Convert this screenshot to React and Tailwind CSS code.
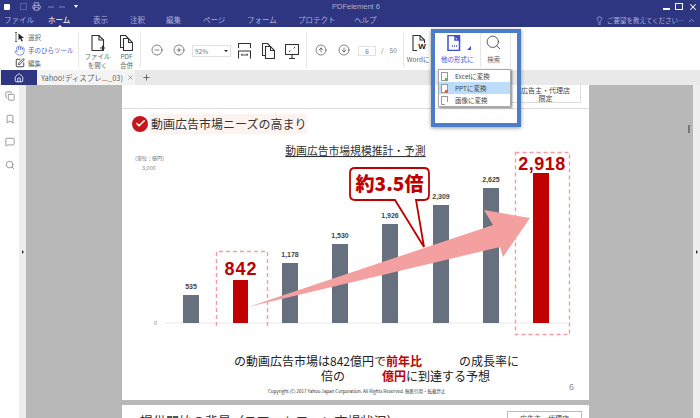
import {
    Bookmark, ChevronUp, CircleArrowDown, CircleArrowUp, CircleMinus, CirclePlus, Copy,
    Hand, House, Lightbulb, MessageSquare, Plus, Printer, Search, SquarePen, X, Check,
} from 'lucide-react';

const jp = "font-['Noto_Sans_CJK_JP','Noto_Sans',sans-serif]";
const latin = "font-['Liberation_Sans',sans-serif]";

const menus = [
    ['ファイル', 'w-[43px] pl-[4px]'],
    ['ホーム', 'w-[45px] pl-[5px] text-white'],
    ['表示', 'w-[37px] pl-[5px]'],
    ['注釈', 'w-[36px] pl-[5px]'],
    ['編集', 'w-[37px] pl-[5px]'],
    ['ページ', 'w-[44px] pl-[5px]'],
    ['フォーム', 'w-[51px] pl-[5px]'],
    ['プロテクト', 'w-[57px] pl-[5px]'],
    ['ヘルプ', 'w-[40px] pl-[4px]'],
];

const bars = [
    { x: 183, top: 295, label: '535' },
    { x: 282, top: 263, label: '1,178' },
    { x: 332, top: 244, label: '1,530' },
    { x: 382, top: 224, label: '1,926' },
    { x: 433, top: 205, label: '2,309' },
    { x: 483, top: 188, label: '2,625' },
];

function Sep({ className = '' }) {
    return <div className={`w-px h-[34px] mt-[6px] shrink-0 bg-[#e6e6e6] ${className}`} />;
}

// page with a folded corner, used by most of the ribbon buttons
function PageIcon({ className = '', weight = 1.1, children }) {
    return (
        <svg width="14" height="16" viewBox="0 0 14 16" fill="none" stroke="currentColor" strokeWidth={weight} className={className}>
            <path d="M1 .5H8L12.5 5V15.5H1Z" />
            <path d="M8 .5V5H12.5" />
            {children}
        </svg>
    );
}

function PagesIcon({ className = '' }) {
    return (
        <svg width="13" height="16" viewBox="0 0 13 16" fill="none" stroke="currentColor" strokeWidth="1.1" className={className}>
            <path d="M3.5 12.5H.5V.5H5.5L8 3" />
            <path d="M3.5 3.5H8.5L12.5 7.5V15.5H3.5Z" />
            <path d="M8.5 3.5V7.5H12.5" />
        </svg>
    );
}

function SelectIcon() {
    return (
        <svg width="10" height="10" viewBox="0 0 10 10" className="shrink-0 text-[#222]">
            <path d="M1 0V10M0 .5H2M0 9.5H2" stroke="#555" strokeWidth=".8" fill="none" />
            <path d="M3.5 1.5L9 6H6.5L7.8 9L6.5 9.5L5.2 6.6L3.5 8Z" fill="currentColor" />
        </svg>
    );
}

function FitWidthIcon() {
    return (
        <svg width="13" height="16" viewBox="0 0 13 16" fill="none" stroke="#333" strokeWidth="1.1" className="ml-[7px] mt-[16px] shrink-0">
            <path d="M.5 5V.5H12.5V5" />
            <path d="M.5 15.5V8H12.5V15.5" />
            <path d="M3 12H10M3 12L4.5 10.8M10 12L8.5 10.8" strokeWidth=".9" />
        </svg>
    );
}

function MonitorIcon() {
    return (
        <svg width="14" height="15" viewBox="0 0 14 15" fill="none" stroke="#333" strokeWidth="1.1" className="ml-[10px] mt-[17px] shrink-0">
            <rect x=".5" y=".5" width="13" height="10" />
            <path d="M7 10.5V14M4 14.5H10" />
            <path d="M4 8L5.5 6.5M8.5 4.5L10 3" strokeWidth=".9" />
        </svg>
    );
}

function ConvertItem({ label, dot, active }) {
    return (
        <div className={`flex items-center h-[12px] pl-[2px] ${active ? 'bg-[#bcdcf7]' : ''}`}>
            <div className="relative w-[7px] h-[9px] border border-[#999] bg-white">
                <div className={`absolute -right-px -bottom-px w-[3px] h-[3px] ${dot}`} />
            </div>
            <span className="ml-[7px] text-[6.5px] leading-none text-[#444]">{label}</span>
        </div>
    );
}

function TitleBar() {
    return (
        <div className="relative flex items-center h-[13px] text-[#c3c7e2]">
            <div className="flex items-center pl-[4px]">
                <div className="w-[6px] h-[6px] bg-white rounded-[1px]" />
                <div className="w-[7px] h-[7px] ml-[10px] border border-[#565ca0]" />
                <Printer size={9} className="ml-[5px]" />
                <div className="w-[6px] h-[2px] ml-[7px] bg-[#565ca0]" />
                <div className="w-[6px] h-[2px] ml-[5px] bg-[#565ca0]" />
                <div className="w-0 h-0 ml-[9px] border-x-[2px] border-t-[3px] border-x-transparent border-t-white" />
            </div>
            <span className={`absolute left-[332px] text-[7.5px] leading-none text-[#a9aed6] ${latin}`}>PDFelement 6</span>
            <div className="ml-auto flex items-center gap-[5px] pr-[2px] text-white">
                <div className="w-[7px] h-[2px] mt-[5px] bg-white" />
                <div className="w-[8px] h-[7px] border border-white" />
                <X size={10} strokeWidth={2.5} />
            </div>
        </div>
    );
}

function MenuBar() {
    return (
        <div className="relative flex items-center h-[14px] text-[7.5px] leading-none text-[#a9aed6] whitespace-nowrap">
            {menus.map(([label, cls]) => (
                <span key={label} className={cls}>{label}</span>
            ))}
            <div className="ml-auto flex items-center pr-[4px]">
                <Lightbulb size={9} />
                <span className="ml-[3px] w-[79px] text-[6.5px]">ご要望を教えてください…</span>
                <ChevronUp size={9} className="ml-[1px]" />
            </div>
            <div className="absolute left-[58px] bottom-0 w-0 h-0 border-x-[2px] border-b-[2px] border-x-transparent border-b-white" />
        </div>
    );
}

function Ribbon() {
    return (
        <div className="flex items-start h-[43px] bg-white text-[#666] text-[6.5px] leading-[9px] whitespace-nowrap">
            <div className="flex flex-col w-[78px] pt-[5px] pl-[15px] gap-[3px] shrink-0">
                <div className="flex items-center h-[10px] gap-[3px]"><SelectIcon />選択</div>
                <div className="flex items-center h-[10px] -ml-[1px] gap-[3px] text-[#3d5bd6]"><Hand size={11} strokeWidth={1.4} />手のひらツール</div>
                <div className="flex items-center h-[10px] gap-[3px]"><SquarePen size={10} className="text-[#222]" />編集</div>
            </div>
            <Sep />
            <div className="flex flex-col items-center w-[25px] ml-[6px] mt-[8px] shrink-0">
                <PageIcon className="text-[#333]">
                    <path d="M9 13H14M11.5 10.5V15.5" stroke="#333" fill="none" />
                </PageIcon>
                <span className="text-center mt-px">ファイル<br />を開く</span>
            </div>
            <div className="flex flex-col items-center w-[13px] ml-[10px] mt-[8px] shrink-0">
                <PagesIcon className="text-[#333]" />
                <span className="text-center mt-px">PDF<br />合併</span>
            </div>
            <Sep className="ml-[7px]" />
            <CircleMinus size={12} strokeWidth={1.2} className="ml-[10px] mt-[17px] shrink-0 text-[#333]" />
            <CirclePlus size={12} strokeWidth={1.2} className="ml-[10px] mt-[17px] shrink-0 text-[#333]" />
            <div className="flex items-center justify-between w-[39px] h-[12px] ml-[7px] mt-[18px] px-[2px] shrink-0 border border-[#e2e2e2] text-[6.5px] text-[#777]">
                92%
                <div className="w-0 h-0 border-x-[2px] border-t-[2px] border-x-transparent border-t-[#222]" />
            </div>
            <FitWidthIcon />
            <PagesIcon className="ml-[11px] mt-[16px] shrink-0 text-[#333]" />
            <MonitorIcon />
            <Sep className="ml-[7px]" />
            <CircleArrowUp size={12} strokeWidth={1.2} className="ml-[8px] mt-[17px] shrink-0 text-[#333]" />
            <CircleArrowDown size={12} strokeWidth={1.2} className="ml-[11px] mt-[17px] shrink-0 text-[#333]" />
            <div className="flex items-center justify-center w-[18px] h-[10px] ml-[8px] mt-[19px] shrink-0 border border-[#e2e2e2] text-[#777]">6</div>
            <span className="ml-[5px] mt-[19px] text-[#777]">/</span>
            <span className="ml-[6px] mt-[19px] text-[#777]">50</span>
            <Sep className="ml-[6px]" />
            <div className="flex flex-col items-center w-[28px] ml-[1px] mt-[8px] shrink-0 overflow-hidden">
                <div className="relative">
                    <PageIcon className="text-[#333]" />
                    <span className={`absolute -right-[1px] bottom-0 px-px text-[8px] leading-none font-bold text-[#222] bg-white ${latin}`}>W</span>
                </div>
                <span className="mt-[4px] text-left w-full pl-[2px]">Wordに</span>
            </div>
            <div className="relative flex flex-col items-center w-[41px] ml-[6px] mt-[8px] pr-[4px] shrink-0 text-[#3d4fd6]">
                <PageIcon weight={1.5} className="-ml-[6px]">
                    <path d="M8 .5H12.5V5Z" fill="currentColor" />
                    <path d="M5 11H10" strokeDasharray="1 1" />
                </PageIcon>
                <svg width="4" height="4" viewBox="0 0 4 4" className="absolute right-[9px] top-[11px]">
                    <path d="M4 0V4H0Z" fill="currentColor" />
                </svg>
                <span className="mt-[4px]">他の形式に</span>
            </div>
            <Sep />
            <div className="flex flex-col items-center w-[16px] ml-[5px] mt-[7px] shrink-0">
                <Search size={17} strokeWidth={1.1} className="text-[#333]" />
                <span className="mt-[4px]">検索</span>
            </div>
            <Sep className="ml-[8px]" />
        </div>
    );
}

function TabBar() {
    return (
        <div className="flex items-center h-[15px] bg-[#e9e9e9]">
            <div className="flex items-center justify-center w-[36px] h-full ml-px bg-[#2e3581] text-white">
                <House size={10} />
            </div>
            <div className="flex items-center justify-between w-[98px] h-full pl-[4px] pr-[1px] bg-[#f4f4f4] text-[7.5px] text-[#666] whitespace-nowrap">
                Yahoo!ディスプレ..._03)
                <X size={7} />
            </div>
            <Plus size={9} className="ml-[7px] text-[#444]" />
        </div>
    );
}

function ConvertMenu() {
    return (
        <div className="absolute left-[438px] top-[69px] w-[73px] bg-white border border-[#aaa] shadow-[1px_1px_2px_rgba(0,0,0,0.5)] z-20">
            <ConvertItem label="Excelに変換" dot="bg-[#5cb85c]" />
            <ConvertItem label="PPTに変換" dot="bg-[#e0633c]" active />
            <ConvertItem label="画像に変換" dot="bg-white" />
        </div>
    );
}

function Chart() {
    return (
        <svg width="467" height="212" viewBox="122 142 467 212" className="block">
            <text x="132" y="160" fontSize="5" fill="#666">（単位：億円）</text>
            <text x="142" y="170" fontSize="5.5" fill="#888">3,000</text>
            <text x="154" y="325" fontSize="5.5" fill="#888">0</text>
            <text x="355.5" y="155" fontSize="10.8" fill="#333" textAnchor="middle" textDecoration="underline">動画広告市場規模推計・予測</text>
            <line x1="165" y1="323" x2="568" y2="323" stroke="#e8e8e8" />
            <path d="M216.5 326V251.5H267.5V326" fill="none" stroke="#f49ba3" strokeWidth="1.4" strokeDasharray="4 3" />
            <rect x="515.5" y="152.5" width="54" height="182" fill="none" stroke="#f49ba3" strokeWidth="1.4" strokeDasharray="4 3" />
            {bars.map((b) => (
                <g key={b.label}>
                    <rect x={b.x} y={b.top} width="16" height={323 - b.top} fill="#67707f" />
                    <text x={b.x + 8} y={b.top - 6} fontSize="7" fontWeight="700" fill="#444" textAnchor="middle" fontFamily="Liberation Sans">{b.label}</text>
                </g>
            ))}
            <rect x="233" y="280" width="15" height="43" fill="#c00000" />
            <rect x="533" y="173" width="16" height="150" fill="#c00000" />
            <text x="241" y="275" fontSize="18" fontWeight="700" fill="#c00000" textAnchor="middle" letterSpacing="1" fontFamily="Liberation Sans">842</text>
            <text x="542" y="170" fontSize="18" fontWeight="700" fill="#c00000" textAnchor="middle" letterSpacing="0.5" fontFamily="Liberation Sans">2,918</text>
            <polygon points="248,307 493,225 484,210 530,218 503,257 500,247" fill="#f4a0a0" />
            <path d="M355 168 H424 Q429 168 429 173 V195 Q429 200 424 200 H416 L424 247 L395 200 H355 Q350 200 350 195 V173 Q350 168 355 168 Z" fill="#fff" stroke="#c00000" strokeWidth="1.8" />
            <text x="389.5" y="191" fontSize="19" fontWeight="900" fill="#c00000" textAnchor="middle">約3.5倍</text>
        </svg>
    );
}

function SlidePage() {
    return (
        <div className="w-[467px] h-[315px] shrink-0 bg-white">
            <div className="relative h-[24px] border-b border-[#ddd]">
                <div className="absolute left-[388px] -top-[1px] w-[71px] h-[19px] border border-[#ddd] text-center text-[7px] leading-[8px] pt-px text-[#444]">
                    広告主・代理店<br />限定
                </div>
            </div>
            <div className="flex items-center h-[33px] pl-[10px] pb-[4px]">
                <div className="flex items-center justify-center w-[16px] h-[16px] rounded-full bg-[#c8161d]">
                    <Check size={11} strokeWidth={3.5} className="text-white" />
                </div>
                <span className="ml-[2px] px-[1px] bg-[#fdf3f1] text-[12px] leading-[20px] text-[#333]">動画広告市場ニーズの高まり</span>
            </div>
            <Chart />
            <div className="relative text-[12px] leading-[15px] text-[#222] whitespace-nowrap">
                <div className="pl-[112px] -mt-px">
                    の動画広告市場は842億円で<b className="text-[#c00000]">前年比</b><span className="ml-[37px]">の成長率に</span>
                </div>
                <div className="pl-[199px]">
                    倍の<b className="ml-[37px] text-[#c00000]">億円</b>に到達する予想
                </div>
                <div className="flex items-baseline pl-[146px] mt-[4px]">
                    <span className="text-[4.5px] leading-[8px] text-[#333]">Copyright (C) 2017 Yahoo Japan Corporation. All Rights Reserved. 無断引用・転載禁止</span>
                    <span className={`absolute left-[447px] top-[27px] text-[9px] text-[#889] ${latin}`}>6</span>
                </div>
            </div>
        </div>
    );
}

function NextPage() {
    return (
        <div className="flex items-start justify-between w-[467px] h-[20px] mt-[5px] pt-[6px] pl-[18px] pr-[7px] bg-white text-[13px] leading-[16px] text-[#333] whitespace-nowrap">
            <span className="mt-[2px]">提供開始の背景（スマートフォン市場状況）</span>
            <div className="w-[75px] h-[16px] border border-[#bbb] text-center text-[7px] leading-[10px] pt-[1px] text-[#444]">広告主・代理店</div>
        </div>
    );
}

export default function App() {
    return (
        <div className={`relative flex flex-col w-[700px] h-[418px] overflow-hidden bg-white ${jp}`}>
            <div className="bg-[#2e3581] h-[27px]">
                <TitleBar />
                <MenuBar />
            </div>
            <Ribbon />
            <TabBar />
            <div className="flex flex-1 min-h-0">
                <div className="flex flex-col items-center w-[19px] pt-[6px] gap-[13px] bg-white text-[#888]">
                    <Copy size={10} />
                    <Bookmark size={10} />
                    <MessageSquare size={10} />
                    <Search size={10} />
                </div>
                <div className="flex items-center justify-center w-[7px] bg-[#eee]">
                    <div className="w-0 h-0 border-y-[2px] border-l-[2px] border-y-transparent border-l-[#333]" />
                </div>
                <div className="flex-1 flex flex-col pl-[96px] bg-[#b8b8b8] overflow-hidden">
                    <SlidePage />
                    <NextPage />
                </div>
                <div className="flex items-center justify-center w-[7px] bg-[#eee]">
                    <div className="w-0 h-0 border-y-[2px] border-l-[2px] border-y-transparent border-l-[#333]" />
                </div>
            </div>
            <ConvertMenu />
            <div className="absolute left-[431px] top-[29px] w-[90px] h-[98px] border-[4px] border-[#4d7cc9] shadow-[0_1px_4px_rgba(0,0,0,0.4)] z-30" />
            <div className="absolute left-[688px] top-[125px] w-[2px] h-[8px] bg-[#777]" />
        </div>
    );
}
